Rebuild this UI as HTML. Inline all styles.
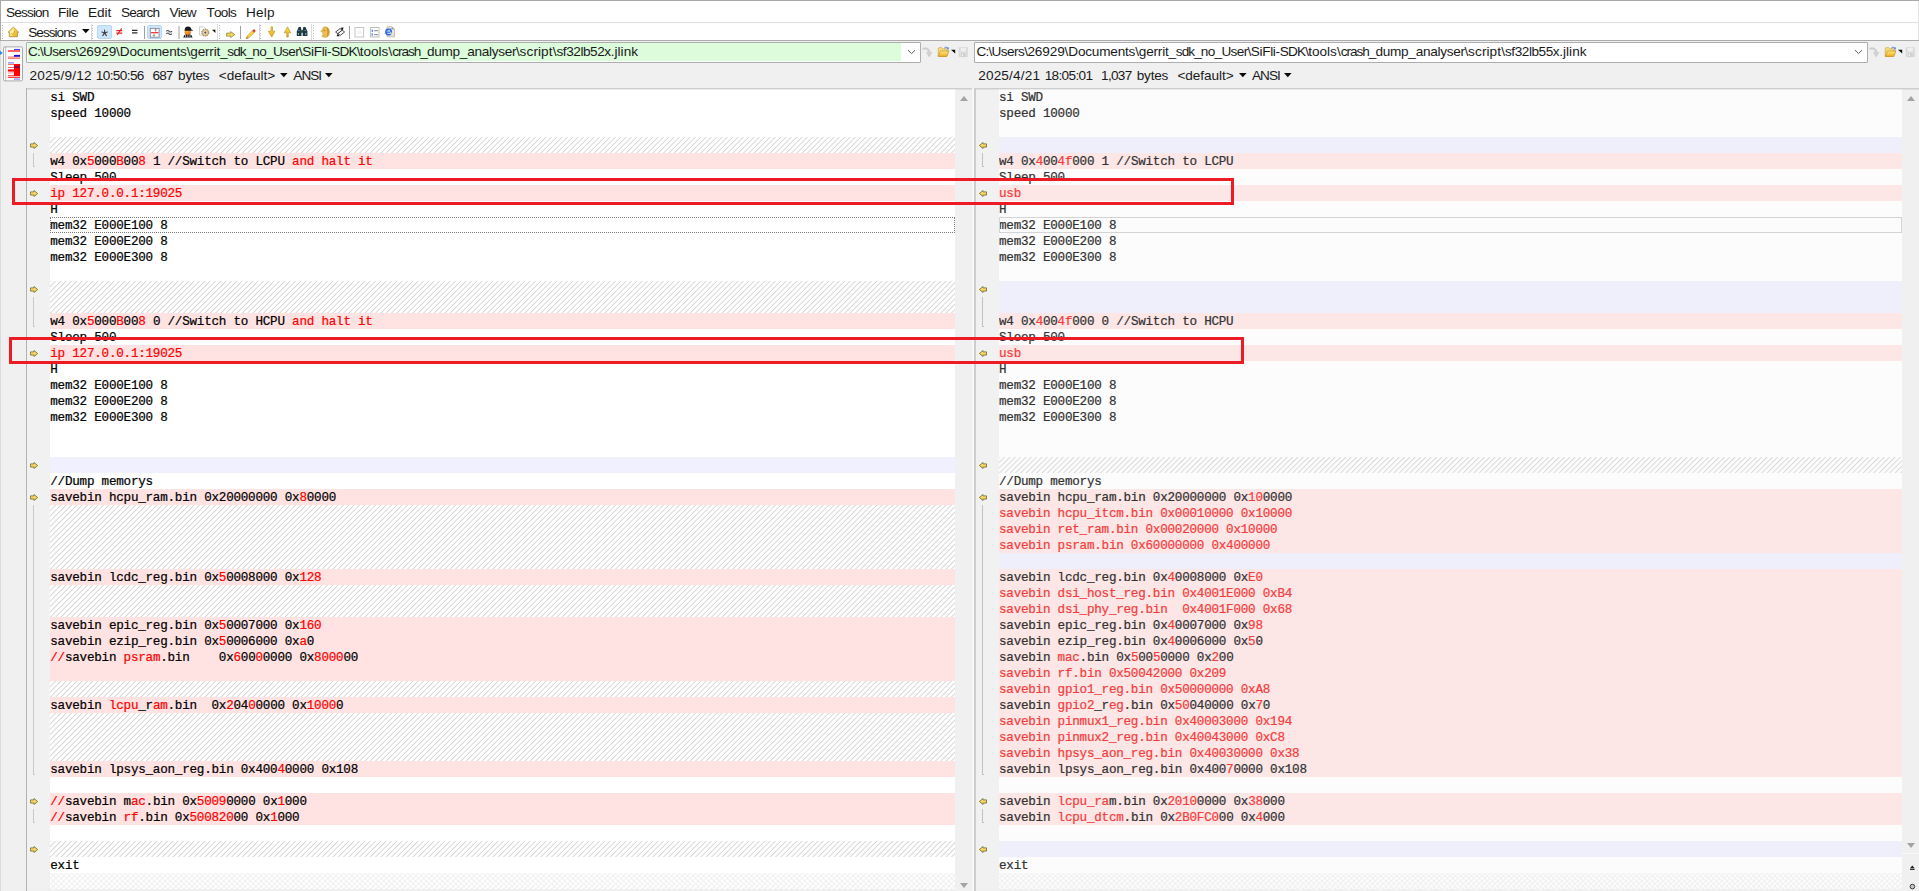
<!DOCTYPE html>
<html lang="en"><head><meta charset="utf-8"><title>sf32lb52x.jlink &lt;--&gt; sf32lb55x.jlink - Text Compare</title>
<style>
html,body{margin:0;padding:0}
body{width:1919px;height:891px;overflow:hidden;background:#f0f0f0;position:relative;
 font-family:"Liberation Sans","DejaVu Sans",sans-serif;font-size:13.6px;color:#000}
.abs{position:absolute}
#menubar{position:absolute;left:0;top:0;width:1919px;height:22px;background:#fff;border-top:1px solid #a9a9a9;box-sizing:border-box}
.mi,.tbtxt,.ps,.info{position:absolute;line-height:15px;white-space:pre;color:#1a1a1a;font-kerning:none}
.mi{top:4.4px}
.tbtxt{top:24.5px}
.ps{top:43.6px}
.info{top:68.4px}
#toolbar{position:absolute;left:0;top:22px;width:1919px;height:19px;background:#fff;border-top:1.5px solid #dfdfe2;border-bottom:1px solid #ababab;box-sizing:border-box}
#lborder{position:absolute;left:0;top:0;width:1px;height:41px;background:#a9a9a9}
#lborder2{position:absolute;left:0;top:41px;width:1px;height:850px;background:#dcdcdc}
.grip{position:absolute;top:24.6px;width:1.2px;height:14px;background:repeating-linear-gradient(180deg,#bdbdbd 0,#bdbdbd 1px,transparent 1px,transparent 2.6px)}
.band{top:23.5px;width:1px;height:16.5px;background:#dadada}
.sep{position:absolute;top:26px;width:1px;height:13px;background:#a0a0a0}
.hot{position:absolute;top:25px;height:14px;box-sizing:border-box;background:#cde6fb;border:1px solid #b3d9f8;border-radius:2px}
.ic{position:absolute;overflow:visible}
/* path rows */
.pathbox{position:absolute;top:41.6px;height:21.1px;box-sizing:border-box;background:#fff;border:1px solid #adadad;border-radius:1px}
.pathbox .fill{position:absolute;left:0.3px;top:0.5px;bottom:0.9px;background:#dcfcdc}
.pathbox .tx{position:absolute;left:1.6px;top:1.5px;line-height:15px;white-space:pre;color:#111}
.dd{position:absolute;width:0;height:0;border-left:3.7px solid transparent;border-right:3.7px solid transparent;border-top:4.1px solid #0a0a0a}
/* editors */
.pane{position:absolute;top:89px;height:800px;overflow:hidden}
.gut{position:absolute;top:89px;height:800px;background:#f1f1f1;overflow:hidden}
.l{height:16px;line-height:18.6px;white-space:pre;box-sizing:border-box;
 font-family:"Liberation Mono","DejaVu Sans Mono",monospace;font-size:12.6px;letter-spacing:-0.231px;-webkit-text-stroke:0.22px currentColor}
.l i{font-style:normal}
#pl .l{color:#000;padding-left:0.3px}
#pl .l i{color:#ff0000}
#pl{background:#fff}
#pl .P{background:#ffe3e3}
#pl .L{background:#f0f0ff}
#pl .H{background:#fff repeating-linear-gradient(135deg,rgba(0,0,0,0) -0.62px,#d4d4d4 0.28px,rgba(0,0,0,0) 1.18px,rgba(0,0,0,0) 3.15px)}
#pl .X,#pr .X{background:
  repeating-linear-gradient(135deg,rgba(0,0,0,0) -0.62px,#efefef 0.28px,rgba(0,0,0,0) 1.18px,rgba(0,0,0,0) 3.15px),
  repeating-linear-gradient(45deg,rgba(0,0,0,0) -0.62px,#efefef 0.28px,rgba(0,0,0,0) 1.18px,rgba(0,0,0,0) 3.15px)}
#pr{background:#fcfcfc}
#pr .l{color:#323232;padding-left:0.3px}
#pr .l i{color:#f53c3c}
#pr .P{background:#fce6e6}
#pr .L{background:#efeffb}
#pr .H{background:#fcfcfc repeating-linear-gradient(135deg,rgba(0,0,0,0) -0.62px,#d7d7d7 0.28px,rgba(0,0,0,0) 1.18px,rgba(0,0,0,0) 3.15px)}
.ar{position:absolute}
.ar.lft{left:3px}
.ar.rgt{left:2.6px;transform:scaleX(-1)}
.br{position:absolute;left:5.5px;width:2.8px;border-left:1.5px solid #c9c9c9;border-bottom:1.2px solid #c9c9c9;box-sizing:border-box}
#gr .br{left:5.6px;border-left:1.2px solid #c2c2c2;border-bottom:1.2px solid #c2c2c2}
.sb{position:absolute;background:#f0f0f0}
.tri{position:absolute;width:0;height:0;border-left:4px solid transparent;border-right:4px solid transparent}
.tri.up{border-bottom:5.5px solid #a3a3a3}
.tri.dn{border-top:5.5px solid #a3a3a3}
.redbox{position:absolute;box-sizing:border-box;border:3px solid #ed1c24}
</style></head><body>

<svg width="0" height="0" style="position:absolute"><defs>
 <linearGradient id="gy" x1="0" y1="0" x2="0" y2="1"><stop offset="0" stop-color="#ffe98a"/><stop offset="1" stop-color="#f5c52c"/></linearGradient>
 <path id="arw" d="M0.5 1.9H4V0.5L7.6 3.5L4 6.5V5.1H0.5Z" fill="url(#gy)" stroke="#7d7a40" stroke-width="0.95" stroke-linejoin="round"/>
</defs></svg>

<!-- ===== menu bar ===== -->
<div id="menubar">
<span class="mi" style="left:6.08px;letter-spacing:-0.847px">Session</span>
<span class="mi" style="left:57.98px;letter-spacing:-0.365px">File</span>
<span class="mi" style="left:87.98px;letter-spacing:-0.007px">Edit</span>
<span class="mi" style="left:120.98px;letter-spacing:-0.818px">Search</span>
<span class="mi" style="left:169.54px;letter-spacing:-0.784px">View</span>
<span class="mi" style="left:206.39px;letter-spacing:-0.690px">Tools</span>
<span class="mi" style="left:245.88px;letter-spacing:0.205px">Help</span>
</div>

<!-- ===== toolbar ===== -->
<div id="toolbar"></div>
<div id="lborder"></div><div id="lborder2"></div>
<div class="grip" style="left:2px"></div>
<span class="tbtxt" style="left:28.28px;letter-spacing:-0.982px">Sessions</span>
<svg class="abs" style="left:81.8px;top:29.0px" width="8" height="5" viewBox="0 0 8 5"><path d="M0 0H7.6L3.8 4.3Z" fill="#0a0a0a"/></svg>
<div class="grip" style="left:92px"></div>
<div class="hot" style="left:97px;width:15px"></div>
<div class="sep" style="left:144px"></div>
<div class="hot" style="left:147px;width:15px"></div>
<div class="sep" style="left:178.3px;width:1.5px;background:#cfcfcf"></div>
<div class="grip" style="left:219px"></div>
<div class="sep" style="left:240px"></div>
<div class="grip" style="left:260px"></div>
<div class="grip" style="left:313px"></div>
<div class="sep" style="left:349px"></div>
<svg class="abs" style="left:0;top:22px" width="420" height="20" viewBox="0 22 420 20">
 <defs>
  <linearGradient id="gold" x1="0" y1="0" x2="1" y2="1"><stop offset="0" stop-color="#fff2a0"/><stop offset=".5" stop-color="#f5cd3e"/><stop offset="1" stop-color="#e6a820"/></linearGradient>
  <linearGradient id="gold2" x1="0" y1="0" x2="0" y2="1"><stop offset="0" stop-color="#ffe14a"/><stop offset="1" stop-color="#eca514"/></linearGradient>
  <radialGradient id="face" cx=".4" cy=".35" r=".7"><stop offset="0" stop-color="#ffb040"/><stop offset="1" stop-color="#d46a10"/></radialGradient>
 </defs>
 <!-- home / sessions -->
 <path d="M13.3 27.1L18.7 32.3H17.6V36.7H9.3V32.3H8Z" fill="url(#gold)" stroke="#a8923a" stroke-width=".8" stroke-linejoin="round"/>
 <path d="M13.2 28.8L10.2 31.8V35.4L12.6 35.8L14.4 31.6Z" fill="#fff6c0" opacity=".8"/>
 <path d="M11 33.2l1.6 1.4 2.2-3.6" fill="none" stroke="#b09030" stroke-width=".7"/>
 <!-- asterisk -->
 <g stroke="#3a3a3a" stroke-width="1.05" stroke-linecap="round">
  <path d="M104.6 29.9V32.9M104.6 32.9L101.9 32M104.6 32.9L107.3 32M104.6 32.9L102.8 35.6M104.6 32.9L106.4 35.6"/>
 </g>
 <!-- not equal -->
 <g stroke="#e32626" stroke-width="1.25" fill="none"><path d="M116.3 30.6H122.2M116.3 33H122.2"/><path d="M117.3 35L121.6 28.4" stroke-width="1.1"/></g>
 <!-- equal -->
 <path d="M132 30.4H137.5M132 32.9H137.5" stroke="#2b2b2b" stroke-width="1.3"/>
 <!-- diff-lines box -->
 <rect x="150.3" y="28.4" width="8.8" height="8.8" fill="#fff" stroke="#8a8a8a" stroke-width=".9"/>
 <path d="M151 32.7H158.4" stroke="#e22c2c" stroke-width="1.2"/>
 <path d="M155.6 31.6V29.3M154.6 30.3L155.6 29.2L156.6 30.3M154 33.9V36.2M153 35.2L154 36.3L155 35.2" stroke="#6c6c6c" stroke-width=".7" fill="none"/>
 <!-- approx -->
 <path d="M166.3 31.3q1.4-1.5 2.8 0t2.9-.2M166.3 33.8q1.4-1.5 2.8 0t2.9-.2" stroke="#4a4a4a" stroke-width="1.05" fill="none"/>
 <!-- referee -->
 <circle cx="187.7" cy="32.2" r="3.1" fill="url(#face)"/>
 <path d="M184.6 30.4Q184.6 26.5 188 26.5Q191 26.6 191.4 29.6L193 30.2L192.6 30.8L184.6 30.8Z" fill="#15191c"/>
 <path d="M183.2 37.5L184.4 35L186.3 34.4L187.8 35.6L189.4 34.4L191.3 35L192.6 37.5Z" fill="#14181b"/>
 <path d="M185.6 34.9V37.5M187.8 35.6V37.5M190 34.9V37.5" stroke="#e8e8e8" stroke-width=".7"/>
 <!-- page + gear (rules) -->
 <path d="M199.5 26.8H203.5L205.5 28.8V35H199.5Z" fill="#fff" stroke="#c4c4c4" stroke-width=".8"/>
 <circle cx="205.3" cy="32.6" r="3.6" fill="#cdb07a" stroke="#9a7c48" stroke-width=".8" stroke-dasharray="1.4 .9"/>
 <circle cx="205.3" cy="32.6" r="2.3" fill="#e9dcc0"/>
 <circle cx="205.3" cy="32.6" r="1.1" fill="#54534e"/>
 <path d="M212 29.8H215.4V33.1Z" fill="#111"/>
 <!-- copy to right arrow -->
 <path d="M226.6 33.1H230.6V31.6L234.8 34.6L230.6 37.6V36.1H226.6Z" fill="#f8d94e" stroke="#8c8a4c" stroke-width=".8" stroke-linejoin="round"/>
 <!-- pencil -->
 <path d="M246.2 38.8L247 36.2L253 29.9L255 31.8L248.9 38Z" fill="#f6cf3c" stroke="#b8922a" stroke-width=".5"/>
 <path d="M252.2 30.8L253.4 29.5Q254.4 28.9 255.2 29.9Q255.9 30.9 255.1 31.7L254 32.7Z" fill="#e0463c"/>
 <path d="M246.2 38.8L247 36.2L248.9 38Z" fill="#c9935a"/>
 <path d="M246.2 38.8L246.6 37.7L247.3 38.4Z" fill="#444"/>
 <!-- next diff (down) / prev diff (up) -->
 <path d="M271 26.8H272.5V31.2H274.9L271.75 37.1L268.4 31.2H271Z" fill="url(#gold2)" stroke="#b88912" stroke-width=".6" stroke-linejoin="round"/>
 <path d="M286.8 37.1H288.3V32.8H290.7L287.5 26.8L284.3 32.8H286.8Z" fill="url(#gold2)" stroke="#b88912" stroke-width=".6" stroke-linejoin="round"/>
 <!-- binoculars -->
 <g fill="#1d3b42">
  <path d="M298.7 27.1H300.9L301.5 30.4V36H296.8V31.6Z"/>
  <path d="M305.5 27.1H303.3L302.7 30.4V36H307.4V31.6Z"/>
  <rect x="301.2" y="30.2" width="1.8" height="2.6"/>
 </g>
 <path d="M298.4 33V34.9M305.8 33V34.9" stroke="#a8c6cc" stroke-width=".9"/>
 <path d="M298.4 30.4h1.2M304.6 30.4h1.2" stroke="#d4e4e8" stroke-width=".6"/>
 <!-- face (ignore unimportant) -->
 <path d="M324 26.9Q328.6 26.4 329.4 31Q330 35.2 327.2 37Q324.4 38 322.2 36.6L322.4 35L324.6 34.6L322.6 33.6L323 32.4L320.8 31.4L322.6 29.4Q322.6 27.4 324 26.9Z" fill="#ecc04a" stroke="#b8902c" stroke-width=".5"/>
 <path d="M326.4 27.4Q329.2 28.2 329.2 32Q329.2 35.2 327 36.6Q327.8 32 326.4 27.4Z" fill="#cc9a2c"/>
 <path d="M323.6 30.4h1.4" stroke="#6a5418" stroke-width=".8"/>
 <!-- swap sides -->
 <path d="M335.6 32L340 28.6L342.4 30.2L338 33.8Z" fill="#fff" stroke="#1a1a1a" stroke-width=".8"/>
 <path d="M337.8 33.6L342.2 30.2L344.6 32L340.2 35.4Z" fill="#fff" stroke="#1a1a1a" stroke-width=".8"/>
 <path d="M340.6 27.8L343.6 27.6L342.6 30.2Z" fill="#111"/>
 <path d="M339.6 36.2L336.6 36.2L337.8 33.8Z" fill="#111"/>
 <!-- disabled page -->
 <rect x="355" y="27.5" width="8.6" height="9.5" fill="#fff" stroke="#c6c6c6" stroke-width="1"/>
 <path d="M357.2 30.6l1.6 1.7-1.6 1.7M359.4 30.6l1.6 1.7-1.6 1.7" stroke="#e2dfd2" stroke-width=".7" fill="none"/>
 <!-- line numbers page -->
 <rect x="370.4" y="27.5" width="8.6" height="9.5" fill="#fff" stroke="#bdbdbd" stroke-width="1"/>
 <path d="M372.2 29.4V32M372.2 33.2V35.8" stroke="#3c78e8" stroke-width="1.1"/>
 <path d="M374.2 30.6H378M374.2 34.6H378" stroke="#9a9a9a" stroke-width="1.1"/>
 <!-- web page -->
 <path d="M387 26.8H392L394.5 29.3V36.8H387Z" fill="#e6e6d8" stroke="#b4b4a8" stroke-width=".8"/>
 <path d="M392 26.8V29.3H394.5Z" fill="#9a9a90"/>
 <circle cx="388.6" cy="32" r="2.7" fill="none" stroke="#2a62e0" stroke-width="1.5"/>
 <path d="M386 32.2H391.4" stroke="#2a62e0" stroke-width="1.2"/>
 <path d="M389.6 33.6L392 34.4L391 31.6Z" fill="#e6e6d8"/>
 <path d="M384.8 33.6Q388 29 391.6 28.4" stroke="#5a8cf0" stroke-width=".8" fill="none"/>
</svg>


<!-- ===== path rows ===== -->
<div class="pathbox" style="left:26.4px;width:894.2px"><div class="fill" style="width:873.2px"></div></div>
<div class="pathbox" style="left:974.4px;width:893.2px"></div>

<div id="pathL"><span class="ps" style="left:28.06px;letter-spacing:-0.829px">C:\</span><span class="ps" style="left:42.95px;letter-spacing:-0.555px">Users\</span><span class="ps" style="left:78.92px;letter-spacing:-0.121px">26929\</span><span class="ps" style="left:119.78px;letter-spacing:-0.202px">Documents\</span><span class="ps" style="left:190.33px;letter-spacing:-0.215px">gerrit_</span><span class="ps" style="left:227.37px;letter-spacing:-0.950px">sdk_</span><span class="ps" style="left:252.30px;letter-spacing:-0.679px">no_</span><span class="ps" style="left:272.95px;letter-spacing:-0.632px">User\</span><span class="ps" style="left:302.28px;letter-spacing:-0.329px">SiFli-</span><span class="ps" style="left:331.28px;letter-spacing:-0.808px">SDK\</span><span class="ps" style="left:359.79px;letter-spacing:-0.021px">tools\</span><span class="ps" style="left:392.17px;letter-spacing:-1.011px">crash_</span><span class="ps" style="left:426.93px;letter-spacing:-0.268px">dump_</span><span class="ps" style="left:467.17px;letter-spacing:-0.304px">analyser\</span><span class="ps" style="left:519.62px;letter-spacing:0.090px">script\</span><span class="ps" style="left:556.52px;letter-spacing:-0.454px">sf32lb52x</span><span class="ps" style="left:610.66px;letter-spacing:0.043px">.jlink</span></div>
<div id="pathR"><span class="ps" style="left:976.56px;letter-spacing:-0.829px">C:\</span><span class="ps" style="left:991.45px;letter-spacing:-0.555px">Users\</span><span class="ps" style="left:1027.42px;letter-spacing:-0.121px">26929\</span><span class="ps" style="left:1068.28px;letter-spacing:-0.202px">Documents\</span><span class="ps" style="left:1138.83px;letter-spacing:-0.215px">gerrit_</span><span class="ps" style="left:1175.87px;letter-spacing:-0.950px">sdk_</span><span class="ps" style="left:1200.80px;letter-spacing:-0.679px">no_</span><span class="ps" style="left:1221.45px;letter-spacing:-0.632px">User\</span><span class="ps" style="left:1250.78px;letter-spacing:-0.329px">SiFli-</span><span class="ps" style="left:1279.78px;letter-spacing:-0.808px">SDK\</span><span class="ps" style="left:1308.29px;letter-spacing:-0.021px">tools\</span><span class="ps" style="left:1340.67px;letter-spacing:-1.011px">crash_</span><span class="ps" style="left:1375.43px;letter-spacing:-0.268px">dump_</span><span class="ps" style="left:1415.67px;letter-spacing:-0.304px">analyser\</span><span class="ps" style="left:1468.12px;letter-spacing:0.090px">script\</span><span class="ps" style="left:1505.02px;letter-spacing:-0.454px">sf32lb55x</span><span class="ps" style="left:1559.16px;letter-spacing:0.043px">.jlink</span></div>

<svg class="abs" style="left:0;top:42px" width="1919" height="44" viewBox="0 42 1919 44">
 <defs>
  <linearGradient id="fold" x1="0" y1="0" x2="0" y2="1"><stop offset="0" stop-color="#ffe680"/><stop offset="1" stop-color="#f0b020"/></linearGradient>
  <g id="pico">
   <!-- chevron -->
   <path d="M908 50.2L911.5 53.6L915 50.2" fill="none" stroke="#5e5e5e" stroke-width="1"/>
   <!-- disabled redo arrow -->
   <path d="M922.9 49.4Q927.6 48 928.4 52.4H926.4L929.2 56.9L931.8 52.4H930Q929.6 46.6 922.9 48.1Z" fill="#d2d2d2" stroke="#c2c2c2" stroke-width=".5"/>
   <!-- folder -->
   <path d="M938.2 56.4V48.4L939 47.6H941.6L942.6 48.8H946.4V50.4H948.6L946.6 56.4Z" fill="#f6dc7c" stroke="#c8a040" stroke-width=".6"/>
   <path d="M938.4 56.4L940.4 51H948.9L946.8 56.4Z" fill="url(#fold)" stroke="#b98c20" stroke-width=".6"/>
   <path d="M944.2 48.2Q945.6 46.4 947.6 47.6" fill="none" stroke="#4a7ad0" stroke-width=".9"/>
   <path d="M946.6 48.9L948.8 47L948.6 49.6Z" fill="#3a68c0"/>
   <!-- dropdown corner -->
   <path d="M951 49.8H955.2V53.6Z" fill="#0c0c0c"/>
   <!-- disabled save -->
   <path d="M959.2 47.6H967.4V56.6H959.2Z" fill="#dedede" stroke="#d0d0d0" stroke-width=".6"/>
   <rect x="960.8" y="47.8" width="5" height="3.6" fill="#efefef"/>
   <rect x="961" y="53.2" width="4.6" height="3.4" fill="#cfcfcf"/>
   <rect x="961.8" y="54" width="1.2" height="2" fill="#f0f0f0"/>
  </g>
 </defs>
 <use href="#pico"/>
 <use href="#pico" x="947"/>
 <!-- thumbnail -->
 <path d="M0 50.8L2.7 52.9L0 55Z" fill="#1e8ae6"/>
 <rect x="3.5" y="46.9" width="19" height="34" rx="1.2" fill="#fff" stroke="#a9a9a9" stroke-width="1"/>
 <path d="M5.7 47V81" stroke="#a9a9a9" stroke-width=".8"/>
 <g>
  <rect x="14" y="48.9" width="6" height="1.2" fill="#4a48e4"/>
  <rect x="7.9" y="50.1" width="12.1" height="1.8" fill="#ff5252"/>
  <rect x="14" y="54.9" width="6" height="1.9" fill="#2c08c8"/>
  <rect x="7.9" y="56.1" width="6.1" height="1.4" fill="#ffaaaa"/>
  <rect x="7.9" y="57.5" width="12.1" height="1.3" fill="#ff6666"/>
  <rect x="7.9" y="62" width="6.1" height="1.7" fill="#a2a2ff"/>
  <rect x="14" y="64" width="6" height="12" fill="#ff0000"/>
  <rect x="14" y="66" width="6" height="1.9" fill="#94004c"/>
  <rect x="7.9" y="64" width="6.1" height=".8" fill="#ff4a4a"/>
  <rect x="7.9" y="67.2" width="6.1" height=".8" fill="#ff3a3a"/>
  <rect x="7.9" y="69.4" width="6.1" height="2.2" fill="#ff0000"/>
  <rect x="7.9" y="72.1" width="6.1" height="1.5" fill="#ffb4b4"/>
  <rect x="7.9" y="75" width="6.1" height="1" fill="#ff5c5c"/>
  <rect x="7.9" y="76" width="12.1" height=".6" fill="#ffd8d8"/>
  <rect x="7.9" y="76.8" width="12.1" height="1" fill="#ff0a0a"/>
  <rect x="14" y="78.3" width="6" height="1.7" fill="#aaaaff"/>
 </g>
</svg>

<!-- ===== info rows ===== -->
<span class="info" style="left:29.62px;letter-spacing:0.183px">2025/9/12</span>
<span class="info" style="left:95.86px;letter-spacing:-0.629px">10:50:56</span>
<span class="info" style="left:152.61px;letter-spacing:-0.808px">687</span>
<span class="info" style="left:178.12px;letter-spacing:-0.234px">bytes</span>
<span class="info" style="left:218.83px;letter-spacing:-0.048px">&lt;default&gt;</span>
<span class="info" style="left:293.37px;letter-spacing:-0.987px">ANSI</span>
<span class="info" style="left:978.22px;letter-spacing:0.156px">2025/4/21</span>
<span class="info" style="left:1044.66px;letter-spacing:-0.648px">18:05:01</span>
<span class="info" style="left:1101.06px;letter-spacing:-0.703px">1,037</span>
<span class="info" style="left:1136.82px;letter-spacing:-0.259px">bytes</span>
<span class="info" style="left:1177.43px;letter-spacing:-0.048px">&lt;default&gt;</span>
<span class="info" style="left:1251.97px;letter-spacing:-0.987px">ANSI</span>
<svg class="abs" style="left:280.0px;top:72.6px" width="8" height="5" viewBox="0 0 8 5"><path d="M0 0H7.6L3.8 4.3Z" fill="#0a0a0a"/></svg>
<svg class="abs" style="left:324.9px;top:72.6px" width="8" height="5" viewBox="0 0 8 5"><path d="M0 0H7.6L3.8 4.3Z" fill="#0a0a0a"/></svg>

<svg class="abs" style="left:1238.6px;top:72.6px" width="8" height="5" viewBox="0 0 8 5"><path d="M0 0H7.6L3.8 4.3Z" fill="#0a0a0a"/></svg>
<svg class="abs" style="left:1283.7px;top:72.6px" width="8" height="5" viewBox="0 0 8 5"><path d="M0 0H7.6L3.8 4.3Z" fill="#0a0a0a"/></svg>

<!-- ===== left editor ===== -->
<div class="abs" style="left:26px;top:88px;width:946px;height:1px;background:#cdcdcd"></div>
<div class="abs" style="left:27px;top:89px;width:945px;height:1px;background:rgba(0,0,0,0.07);z-index:3"></div>
<div class="abs" style="left:26px;top:88px;width:1px;height:803px;background:#b2b2b2"></div>
<div class="gut" id="gl" style="left:27px;width:23px">
<svg class="ar lft" style="top:52.5px" width="8" height="7" viewBox="0 0 8 7"><use href="#arw"/></svg>
<svg class="ar lft" style="top:100.5px" width="8" height="7" viewBox="0 0 8 7"><use href="#arw"/></svg>
<svg class="ar lft" style="top:196.5px" width="8" height="7" viewBox="0 0 8 7"><use href="#arw"/></svg>
<svg class="ar lft" style="top:260.5px" width="8" height="7" viewBox="0 0 8 7"><use href="#arw"/></svg>
<svg class="ar lft" style="top:372.5px" width="8" height="7" viewBox="0 0 8 7"><use href="#arw"/></svg>
<svg class="ar lft" style="top:404.5px" width="8" height="7" viewBox="0 0 8 7"><use href="#arw"/></svg>
<svg class="ar lft" style="top:708.5px" width="8" height="7" viewBox="0 0 8 7"><use href="#arw"/></svg>
<svg class="ar lft" style="top:756.5px" width="8" height="7" viewBox="0 0 8 7"><use href="#arw"/></svg>
<div class="br" style="top:64px;height:14px"></div>
<div class="br" style="top:208px;height:30px"></div>
<div class="br" style="top:416px;height:270px"></div>
<div class="br" style="top:720px;height:14px"></div>
</div>
<div class="pane" id="pl" style="left:50px;width:905px">
<div class="l W">si SWD</div>
<div class="l W">speed 10000</div>
<div class="l W"></div>
<div class="l H"></div>
<div class="l P">w4 0x<i>5</i>000<i>B</i>00<i>8</i> 1 //Switch to LCPU <i>and halt it</i></div>
<div class="l W">Sleep 500</div>
<div class="l P"><i>ip 127.0.0.1:19025</i></div>
<div class="l W">H</div>
<div class="l W">mem32 E000E100 8</div>
<div class="l W">mem32 E000E200 8</div>
<div class="l W">mem32 E000E300 8</div>
<div class="l W"></div>
<div class="l H"></div>
<div class="l H"></div>
<div class="l P">w4 0x<i>5</i>000<i>B</i>00<i>8</i> 0 //Switch to HCPU <i>and halt it</i></div>
<div class="l W">Sleep 500</div>
<div class="l P"><i>ip 127.0.0.1:19025</i></div>
<div class="l W">H</div>
<div class="l W">mem32 E000E100 8</div>
<div class="l W">mem32 E000E200 8</div>
<div class="l W">mem32 E000E300 8</div>
<div class="l W"></div>
<div class="l W"></div>
<div class="l L"></div>
<div class="l W">//Dump memorys</div>
<div class="l P">savebin hcpu_ram.bin 0x20000000 0x<i>8</i>0000</div>
<div class="l H"></div>
<div class="l H"></div>
<div class="l H"></div>
<div class="l H"></div>
<div class="l P">savebin lcdc_reg.bin 0x<i>5</i>0008000 0x<i>128</i></div>
<div class="l H"></div>
<div class="l H"></div>
<div class="l P">savebin epic_reg.bin 0x<i>5</i>0007000 0x<i>160</i></div>
<div class="l P">savebin ezip_reg.bin 0x<i>5</i>0006000 0x<i>a</i>0</div>
<div class="l P"><i>//</i>savebin <i>psram</i>.bin    0x<i>6</i>00<i>0</i>0000 0x<i>8000</i>00</div>
<div class="l P"></div>
<div class="l H"></div>
<div class="l P">savebin <i>lcpu</i>_r<i>am</i>.bin  0x<i>2</i>04<i>0</i>0000 0x<i>1000</i>0</div>
<div class="l H"></div>
<div class="l H"></div>
<div class="l H"></div>
<div class="l P">savebin lpsys_aon_reg.bin 0x400<i>4</i>0000 0x108</div>
<div class="l W"></div>
<div class="l P"><i>//</i>savebin m<i>ac</i>.bin 0x<i>5009</i>0000 0x<i>1</i>000</div>
<div class="l P"><i>//</i>savebin <i>rf</i>.bin 0x<i>500820</i>00 0x<i>1</i>000</div>
<div class="l W"></div>
<div class="l H"></div>
<div class="l W">exit</div>
<div class="l X"></div>
</div>
<div class="abs" style="left:50px;top:217px;width:905px;height:16px;box-sizing:border-box;border:1px dotted #7a7a7a"></div>
<div class="sb" style="left:955px;top:89px;width:17px;height:800px"></div>
<div class="tri up" style="left:959.5px;top:96px"></div>
<div class="tri dn" style="left:959.5px;top:882.5px"></div>

<!-- ===== right editor ===== -->
<div class="abs" style="left:972px;top:88px;width:2px;height:803px;background:#f7f7f7"></div>
<div class="abs" style="left:974.5px;top:88px;width:945px;height:1px;background:#cdcdcd"></div>
<div class="abs" style="left:976px;top:89px;width:943px;height:1px;background:rgba(0,0,0,0.07);z-index:3"></div>
<div class="abs" style="left:974px;top:88px;width:2px;height:803px;background:#cdcdcd"></div>
<div class="gut" id="gr" style="left:976px;width:23px">
<svg class="ar rgt" style="top:52.5px" width="8" height="7" viewBox="0 0 8 7"><use href="#arw"/></svg>
<svg class="ar rgt" style="top:100.5px" width="8" height="7" viewBox="0 0 8 7"><use href="#arw"/></svg>
<svg class="ar rgt" style="top:196.5px" width="8" height="7" viewBox="0 0 8 7"><use href="#arw"/></svg>
<svg class="ar rgt" style="top:260.5px" width="8" height="7" viewBox="0 0 8 7"><use href="#arw"/></svg>
<svg class="ar rgt" style="top:372.5px" width="8" height="7" viewBox="0 0 8 7"><use href="#arw"/></svg>
<svg class="ar rgt" style="top:404.5px" width="8" height="7" viewBox="0 0 8 7"><use href="#arw"/></svg>
<svg class="ar rgt" style="top:708.5px" width="8" height="7" viewBox="0 0 8 7"><use href="#arw"/></svg>
<svg class="ar rgt" style="top:756.5px" width="8" height="7" viewBox="0 0 8 7"><use href="#arw"/></svg>
<div class="br" style="top:64px;height:14px"></div>
<div class="br" style="top:208px;height:30px"></div>
<div class="br" style="top:416px;height:270px"></div>
<div class="br" style="top:720px;height:14px"></div>
</div>
<div class="pane" id="pr" style="left:998.7px;width:903.3px">
<div class="l W">si SWD</div>
<div class="l W">speed 10000</div>
<div class="l W"></div>
<div class="l L"></div>
<div class="l P">w4 0x<i>4</i>00<i>4f</i>000 1 //Switch to LCPU</div>
<div class="l W">Sleep 500</div>
<div class="l P"><i>usb</i></div>
<div class="l W">H</div>
<div class="l W">mem32 E000E100 8</div>
<div class="l W">mem32 E000E200 8</div>
<div class="l W">mem32 E000E300 8</div>
<div class="l W"></div>
<div class="l L"></div>
<div class="l L"></div>
<div class="l P">w4 0x<i>4</i>00<i>4f</i>000 0 //Switch to HCPU</div>
<div class="l W">Sleep 500</div>
<div class="l P"><i>usb</i></div>
<div class="l W">H</div>
<div class="l W">mem32 E000E100 8</div>
<div class="l W">mem32 E000E200 8</div>
<div class="l W">mem32 E000E300 8</div>
<div class="l W"></div>
<div class="l W"></div>
<div class="l H"></div>
<div class="l W">//Dump memorys</div>
<div class="l P">savebin hcpu_ram.bin 0x20000000 0x<i>10</i>0000</div>
<div class="l P"><i>savebin hcpu_itcm.bin 0x00010000 0x10000</i></div>
<div class="l P"><i>savebin ret_ram.bin 0x00020000 0x10000</i></div>
<div class="l P"><i>savebin psram.bin 0x60000000 0x400000</i></div>
<div class="l L"></div>
<div class="l P">savebin lcdc_reg.bin 0x<i>4</i>0008000 0x<i>E0</i></div>
<div class="l P"><i>savebin dsi_host_reg.bin 0x4001E000 0xB4</i></div>
<div class="l P"><i>savebin dsi_phy_reg.bin  0x4001F000 0x68</i></div>
<div class="l P">savebin epic_reg.bin 0x<i>4</i>0007000 0x<i>98</i></div>
<div class="l P">savebin ezip_reg.bin 0x<i>4</i>0006000 0x<i>5</i>0</div>
<div class="l P">savebin <i>mac</i>.bin 0x<i>5</i>00<i>5</i>0000 0x<i>2</i>00</div>
<div class="l P"><i>savebin rf.bin 0x50042000 0x209</i></div>
<div class="l P"><i>savebin gpio1_reg.bin 0x50000000 0xA8</i></div>
<div class="l P">savebin <i>gpio2</i>_r<i>eg</i>.bin 0x<i>50</i>040000 0x<i>7</i>0</div>
<div class="l P"><i>savebin pinmux1_reg.bin 0x40003000 0x194</i></div>
<div class="l P"><i>savebin pinmux2_reg.bin 0x40043000 0xC8</i></div>
<div class="l P"><i>savebin hpsys_aon_reg.bin 0x40030000 0x38</i></div>
<div class="l P">savebin lpsys_aon_reg.bin 0x400<i>7</i>0000 0x108</div>
<div class="l W"></div>
<div class="l P">savebin <i>lcpu_ra</i>m.bin 0x<i>2010</i>0000 0x<i>38</i>000</div>
<div class="l P">savebin <i>lcpu_dtcm</i>.bin 0x<i>2B0FC0</i>00 0x<i>4</i>000</div>
<div class="l W"></div>
<div class="l L"></div>
<div class="l W">exit</div>
<div class="l X"></div>
</div>
<div class="abs" style="left:998.7px;top:217px;width:903.3px;height:16px;box-sizing:border-box;border:1px solid #d4d4d4"></div>
<div class="sb" style="left:1902px;top:89px;width:17px;height:802px"></div>
<div class="tri up" style="left:1907px;top:96px"></div>
<div class="tri dn" style="left:1907px;top:843px"></div>
<div class="abs" style="left:1902px;top:853.2px;width:17px;height:1px;background:#f9f9f9"></div>

<div class="abs" style="left:1918px;top:1px;width:1px;height:39px;background:#e4e4e4"></div>
<div class="abs band" style="left:90.6px"></div><div class="abs band" style="left:217.2px"></div><div class="abs band" style="left:258.6px"></div><div class="abs band" style="left:311px"></div>
<svg class="abs" style="left:1902px;top:855px" width="17" height="36" viewBox="1902 855 17 36">
 <path d="M1912.3 865.4L1914.6 868.2H1910Z" fill="#1c1c1c"/><rect x="1910" y="868.8" width="4.6" height="1.1" fill="#1c1c1c"/>
 <circle cx="1912.4" cy="886.6" r="2.3" fill="#c8c8c8" stroke="#2a2a2a" stroke-width=".9"/>
</svg>
<!-- ===== annotation boxes ===== -->
<div class="redbox" style="left:12px;top:178px;width:1222px;height:27px"></div>
<div class="redbox" style="left:9px;top:337px;width:1235px;height:27px"></div>

</body></html>
